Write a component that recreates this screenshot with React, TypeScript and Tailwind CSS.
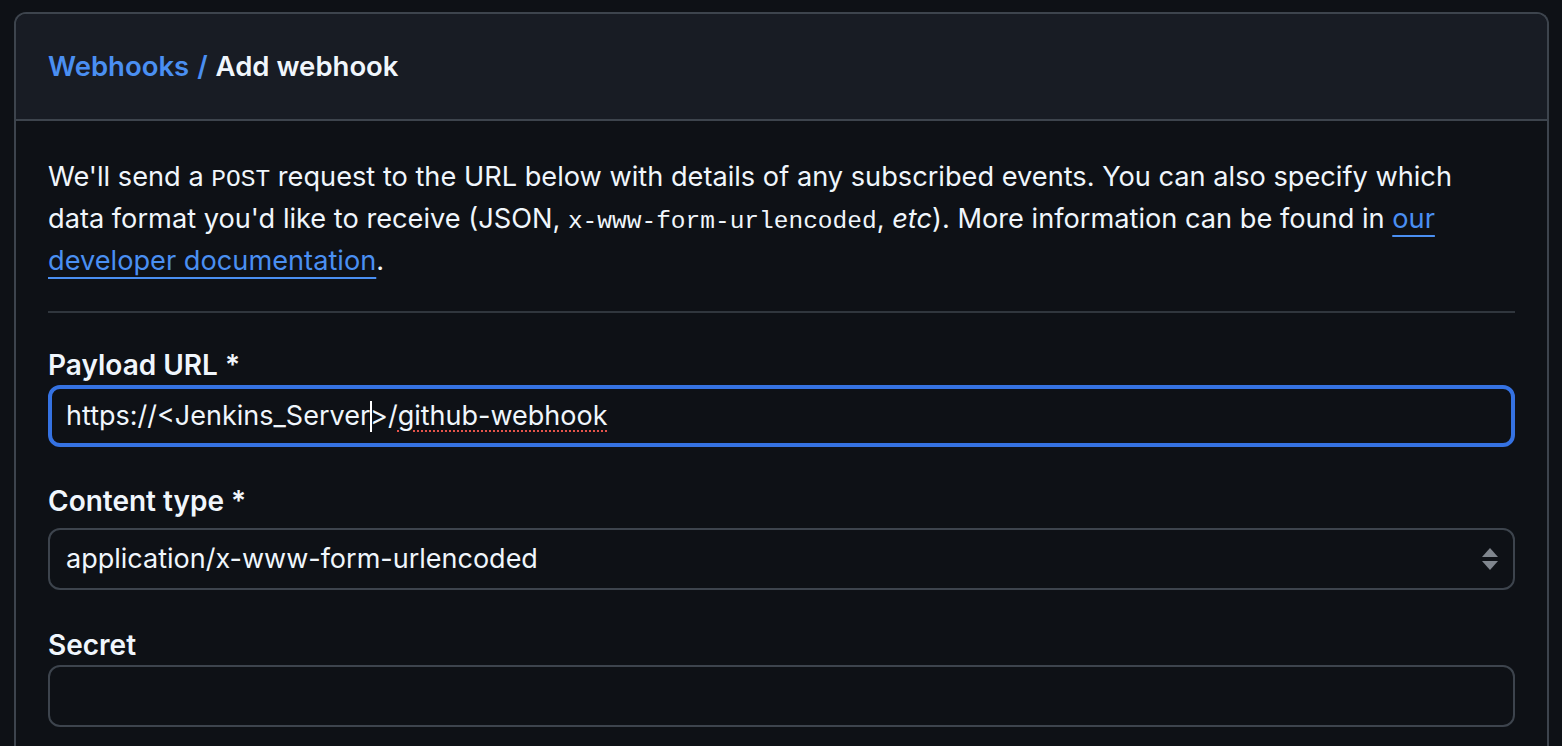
export default function App() {
  return (
    <div
      className="h-screen w-full overflow-hidden bg-[#0e1116] text-[#f0f6fc]"
      style={{ fontFamily: "Inter, 'Noto Sans', sans-serif" }}
    >
      {/* Settings box */}
      <div className="ml-[14px] mt-[12px] min-h-[760px] w-[1535px] rounded-t-[12px] border-2 border-b-0 border-[#3d444d]">
        {/* Header */}
        <div className="flex h-[107px] items-center rounded-t-[10px] border-b-2 border-[#3d444d] bg-[#181c24] px-[32px] text-[27.5px] font-semibold">
          <a className="text-[#4a8ff2]">Webhooks</a>
          <span className="ml-[8px] text-[#4a8ff2]">/</span>
          <span className="ml-[8px]">Add webhook</span>
        </div>

        {/* Body */}
        <div className="px-[32px] pt-[35px]">
          <p className="pr-[40px] text-[27.2px] leading-[42px]">
            We'll send a{" "}
            <code className="text-[24.5px] leading-none" style={{ fontFamily: "'Liberation Mono', monospace" }}>
              POST
            </code>{" "}
            request to the URL below with details of any subscribed events. You can also specify which data format
            you'd like to receive (JSON,{" "}
            <code className="text-[24.5px] leading-none" style={{ fontFamily: "'Liberation Mono', monospace" }}>
              x-www-form-urlencoded
            </code>
            , <em>etc</em>). More information can be found in{" "}
            <a className="text-[#4a8ff2] underline decoration-2 underline-offset-[7px]">our developer documentation</a>.
          </p>

          <div className="mt-[29px] border-t-2 border-[#30363d]" />

          {/* Payload URL */}
          <div className="mt-[32px]">
            <div className="text-[28px] font-semibold leading-[40px]">Payload URL *</div>
            <div className="flex h-[62px] items-center rounded-[12px] border-[4px] border-[#3572e2] px-[14px] text-[27px]">
              <span>https://&lt;Jenkins_Server</span>
              <span className="-mr-[2px] inline-block h-[31px] w-[2px] bg-white" />
              <span>&gt;/</span>
              <span className="underline decoration-[#e5534b] decoration-dotted decoration-2 underline-offset-[6px]">
                github-webhook
              </span>
            </div>
          </div>

          {/* Content type */}
          <div className="mt-[34px]">
            <div className="mb-[7px] text-[28px] font-semibold leading-[40px]">Content type *</div>
            <div className="flex h-[62px] items-center justify-between rounded-[12px] border-2 border-[#3d444d] pl-[16px] pr-[14px] text-[27px]">
              <span>application/x-www-form-urlencoded</span>
              <svg width="18" height="24" viewBox="0 0 18 24" fill="#80868e">
                <path d="M9 1 L17 10 L1 10 Z" />
                <path d="M1 14 L17 14 L9 23 Z" />
              </svg>
            </div>
          </div>

          {/* Secret */}
          <div className="mt-[35px]">
            <div className="text-[28px] font-semibold leading-[40px]">Secret</div>
            <div className="h-[62px] rounded-[12px] border-2 border-[#3d444d]" />
          </div>
        </div>
      </div>
    </div>
  )
}
